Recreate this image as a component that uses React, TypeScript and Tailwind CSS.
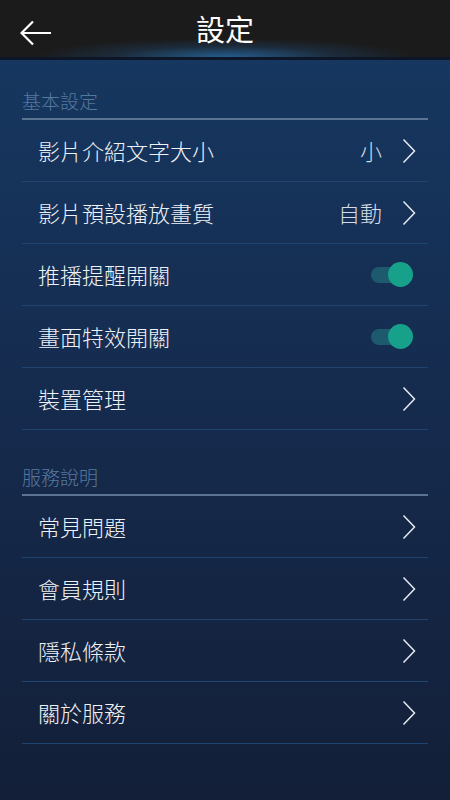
import React from "react";

type Row = {
  label: string;
  value?: string;
  toggle?: boolean;
};

const basic: Row[] = [
  { label: "影片介紹文字大小", value: "小" },
  { label: "影片預設播放畫質", value: "自動" },
  { label: "推播提醒開關", toggle: true },
  { label: "畫面特效開關", toggle: true },
  { label: "裝置管理" },
];

const service: Row[] = [
  { label: "常見問題" },
  { label: "會員規則" },
  { label: "隱私條款" },
  { label: "關於服務" },
];

const Chevron = () => (
  <svg width="14" height="26" viewBox="0 0 14 26" fill="none" className="ml-5">
    <path d="M1.5 1.5L12.5 13L1.5 24.5" stroke="#e6ebf2" strokeWidth="1.5" />
  </svg>
);

const Toggle = () => (
  <div className="relative w-[42px] h-[26px] flex items-center mr-[3px]">
    <div className="w-[32px] h-[16px] rounded-full bg-[#1d5a6d]" />
    <div className="absolute right-0 top-0 w-[25px] h-[25px] rounded-full bg-[#17a08a]" />
  </div>
);

const SettingRow = ({ row }: { row: Row }) => (
  <div className="h-[62px] border-b border-[#1f4470] flex items-center pl-4 pr-[12px]">
    <span className="flex-1 text-[22px] font-light text-[#eef1f6]">{row.label}</span>
    {row.value && <span className="text-[22px] font-light text-[#d6dce6]">{row.value}</span>}
    {row.toggle ? <Toggle /> : <Chevron />}
  </div>
);

const Section = ({ title, rows }: { title: string; rows: Row[] }) => (
  <div className="px-[22px]">
    <div className="h-[40px] flex items-end pb-[3px] border-b-2 border-[#5b7493]">
      <span className="text-[19px] font-light text-[#55789f]">{title}</span>
    </div>
    {rows.map((r) => (
      <SettingRow key={r.label} row={r} />
    ))}
  </div>
);

export default function App() {
  return (
    <div
      className="w-[450px] h-[800px] overflow-hidden flex flex-col bg-gradient-to-b from-[#163963] via-[#152b4e] to-[#131f38]"
      style={{ fontFamily: '"Noto Sans CJK TC", "Noto Sans", sans-serif' }}
    >
      {/* Header */}
      <div className="relative h-[57px] bg-[#1b1b1b] flex items-center justify-center shrink-0 overflow-hidden">
        <div className="absolute bottom-0 left-0 right-0 h-[22px] bg-[radial-gradient(ellipse_at_bottom,rgba(40,120,190,0.7)_0%,rgba(30,90,150,0.25)_35%,rgba(27,27,27,0)_60%)]" />
        <button className="absolute left-[20px] top-[20px]">
          <svg width="32" height="26" viewBox="0 0 32 26" fill="none">
            <path d="M31 13H2M13 1.5L1.5 13L13 24.5" stroke="white" strokeWidth="2.2" />
          </svg>
        </button>
        <h1 className="relative text-[29px] font-normal text-white leading-none">設定</h1>
      </div>
      <div className="h-[3px] bg-[#0c1626] shrink-0" />

      <div className="pt-[20px]">
        <Section title="基本設定" rows={basic} />
        <div className="h-[26px]" />
        <Section title="服務說明" rows={service} />
      </div>
    </div>
  );
}
